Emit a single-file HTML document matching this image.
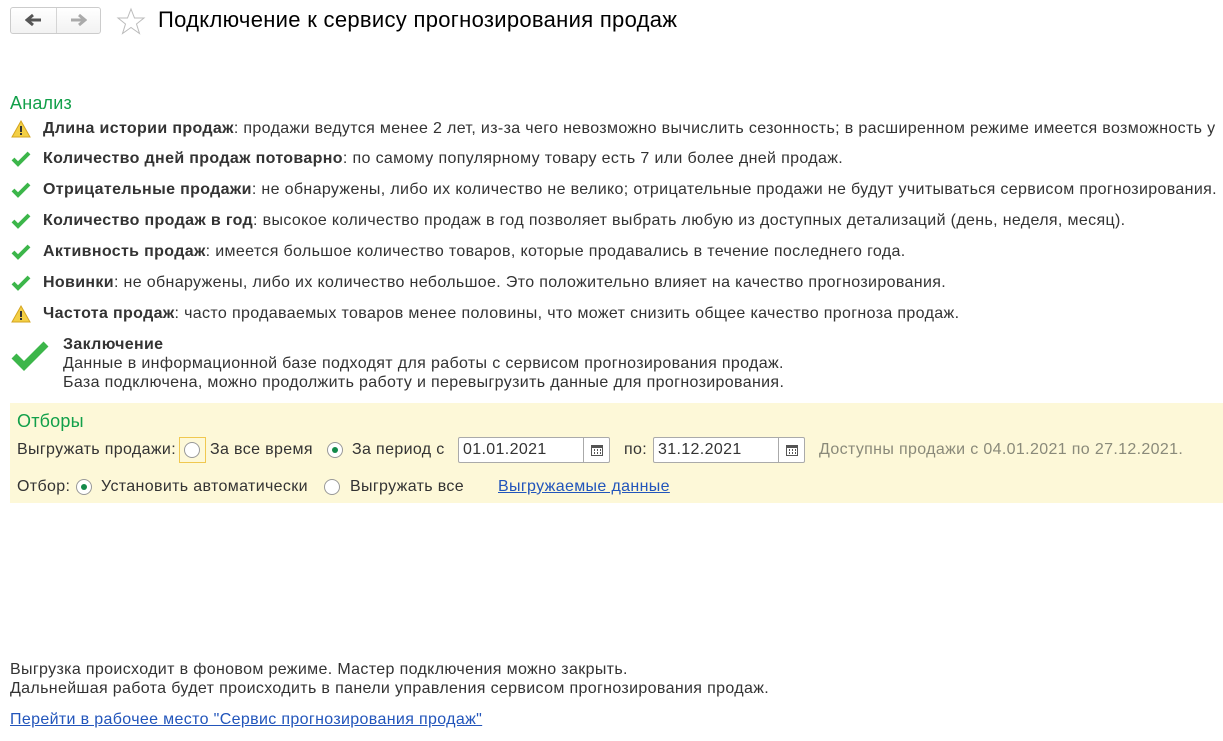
<!DOCTYPE html>
<html><head><meta charset="utf-8"><style>
body{margin:0;width:1223px;height:741px;background:#fff;font-family:"Liberation Sans",Arial,sans-serif;color:#333;font-size:16px;letter-spacing:0.35px;position:relative;overflow:hidden}
.a{position:absolute;white-space:nowrap}
.row{position:absolute;left:43px;white-space:nowrap;line-height:18px}
.row b{color:#333}
.ic{position:absolute;left:11px}
.radio{position:absolute;width:16px;height:16px;border:1px solid #999;border-radius:50%;background:#fff;box-sizing:border-box}
.radio.on::after{content:"";position:absolute;left:4px;top:4px;width:6px;height:6px;border-radius:50%;background:#138a4a}
.inp{position:absolute;height:26px;border:1px solid #aaa;border-radius:2px;background:#fff;box-sizing:border-box;font-size:16px;line-height:24px;padding-left:4px;color:#333}
.inp .btn{position:absolute;right:0;top:0;width:25px;height:24px;border-left:1px solid #aaa}
a{color:#2255bb;text-decoration:underline}
</style></head><body>
<div class="a" style="left:10px;top:7px;width:91px;height:27px;border:1px solid #ccc;border-radius:3px;background:linear-gradient(#fff,#f2f2f2);box-sizing:border-box"></div>
<div class="a" style="left:56px;top:8px;width:1px;height:25px;background:#d5d5d5"></div>
<svg class="a" style="left:25px;top:13px" width="18" height="14"><path d="M2 7h14M8 2L2 7l6 5" stroke="#555" stroke-width="3" fill="none"/></svg>
<svg class="a" style="left:69px;top:13px" width="18" height="14"><path d="M2 7h14M10 2l6 5-6 5" stroke="#aaa" stroke-width="3" fill="none"/></svg>
<svg class="a" style="left:116px;top:7px" width="30" height="28"><path d="M15 2l3.5 9h9.5l-7.5 6 3 9.5-8.5-6-8.5 6 3-9.5-7.5-6h9.5z" fill="none" stroke="#bbb" stroke-width="1"/></svg>
<div class="a" style="left:158px;top:7px;font-size:22px;letter-spacing:0.3px;color:#000">Подключение к сервису прогнозирования продаж</div>

<div class="a" style="left:10px;top:93px;font-size:18px;letter-spacing:0.2px;color:#12a04a">Анализ</div>

<svg class="ic" style="top:120px" width="20" height="18"><path d="M10 1L19 17H1z" fill="#f3cf45" stroke="#d5a520"/><rect x="9" y="6" width="2" height="6" fill="#333"/><rect x="9" y="13" width="2" height="2" fill="#333"/></svg>
<div class="row" style="top:120px"><b>Длина истории продаж</b>: продажи ведутся менее 2 лет, из-за чего невозможно вычислить сезонность; в расширенном режиме имеется возможность у</div>
<svg class="ic" style="top:151px" width="20" height="16"><path d="M2 8l5 5 11-11" stroke="#3cb64a" stroke-width="4" fill="none"/></svg>
<div class="row" style="top:150px"><b>Количество дней продаж потоварно</b>: по самому популярному товару есть 7 или более дней продаж.</div>
<svg class="ic" style="top:182px" width="20" height="16"><path d="M2 8l5 5 11-11" stroke="#3cb64a" stroke-width="4" fill="none"/></svg>
<div class="row" style="top:181px"><b>Отрицательные продажи</b>: не обнаружены, либо их количество не велико; отрицательные продажи не будут учитываться сервисом прогнозирования.</div>
<svg class="ic" style="top:213px" width="20" height="16"><path d="M2 8l5 5 11-11" stroke="#3cb64a" stroke-width="4" fill="none"/></svg>
<div class="row" style="top:212px"><b>Количество продаж в год</b>: высокое количество продаж в год позволяет выбрать любую из доступных детализаций (день, неделя, месяц).</div>
<svg class="ic" style="top:244px" width="20" height="16"><path d="M2 8l5 5 11-11" stroke="#3cb64a" stroke-width="4" fill="none"/></svg>
<div class="row" style="top:243px"><b>Активность продаж</b>: имеется большое количество товаров, которые продавались в течение последнего года.</div>
<svg class="ic" style="top:275px" width="20" height="16"><path d="M2 8l5 5 11-11" stroke="#3cb64a" stroke-width="4" fill="none"/></svg>
<div class="row" style="top:274px"><b>Новинки</b>: не обнаружены, либо их количество небольшое. Это положительно влияет на качество прогнозирования.</div>
<svg class="ic" style="top:305px" width="20" height="18"><path d="M10 1L19 17H1z" fill="#f3cf45" stroke="#d5a520"/><rect x="9" y="6" width="2" height="6" fill="#333"/><rect x="9" y="13" width="2" height="2" fill="#333"/></svg>
<div class="row" style="top:305px"><b>Частота продаж</b>: часто продаваемых товаров менее половины, что может снизить общее качество прогноза продаж.</div>

<svg class="a" style="left:10px;top:340px" width="40" height="32"><path d="M4 16l10 10 22-22" stroke="#3cb64a" stroke-width="7" fill="none"/></svg>
<div class="a" style="left:63px;top:336px;font-weight:bold;line-height:18px">Заключение</div>
<div class="a" style="left:63px;top:354px;line-height:19px">Данные в информационной базе подходят для работы с сервисом прогнозирования продаж.<br>База подключена, можно продолжить работу и перевыгрузить данные для прогнозирования.</div>

<div class="a" style="left:10px;top:403px;width:1213px;height:100px;background:#fdf8d8"></div>
<div class="a" style="left:17px;top:411px;font-size:18px;letter-spacing:0.2px;color:#12a04a">Отборы</div>
<div class="a" style="left:17px;top:441px">Выгружать продажи:</div>
<div class="a" style="left:179px;top:437px;width:27px;height:26px;border:1px solid #f0c850;box-sizing:border-box"></div>
<div class="radio" style="left:184px;top:442px"></div>
<div class="a" style="left:210px;top:441px">За все время</div>
<div class="radio on" style="left:327px;top:442px"></div>
<div class="a" style="left:352px;top:441px">За период с</div>
<div class="inp" style="left:458px;top:437px;width:152px">01.01.2021<div class="btn"><svg style="position:absolute;left:7px;top:6px" width="12" height="12"><rect x="0.5" y="1.5" width="11" height="10" fill="none" stroke="#555"/><rect x="0" y="1" width="12" height="3" fill="#555"/><path d="M3 6h1M6 6h1M9 6h1M3 9h1M6 9h1M9 9h1" stroke="#555" stroke-width="2"/></svg></div></div>
<div class="a" style="left:624px;top:441px">по:</div>
<div class="inp" style="left:653px;top:437px;width:152px">31.12.2021<div class="btn"><svg style="position:absolute;left:7px;top:6px" width="12" height="12"><rect x="0.5" y="1.5" width="11" height="10" fill="none" stroke="#555"/><rect x="0" y="1" width="12" height="3" fill="#555"/><path d="M3 6h1M6 6h1M9 6h1M3 9h1M6 9h1M9 9h1" stroke="#555" stroke-width="2"/></svg></div></div>
<div class="a" style="left:819px;top:441px;color:#8a8a7a">Доступны продажи с 04.01.2021 по 27.12.2021.</div>
<div class="a" style="left:17px;top:478px">Отбор:</div>
<div class="radio on" style="left:76px;top:479px"></div>
<div class="a" style="left:101px;top:478px">Установить автоматически</div>
<div class="radio" style="left:324px;top:479px"></div>
<div class="a" style="left:350px;top:478px">Выгружать все</div>
<div class="a" style="left:498px;top:478px"><a>Выгружаемые данные</a></div>

<div class="a" style="left:10px;top:660px;line-height:19px">Выгрузка происходит в фоновом режиме. Мастер подключения можно закрыть.<br>Дальнейшая работа будет происходить в панели управления сервисом прогнозирования продаж.</div>
<div class="a" style="left:10px;top:711px"><a>Перейти в рабочее место "Сервис прогнозирования продаж"</a></div>
</body></html>
